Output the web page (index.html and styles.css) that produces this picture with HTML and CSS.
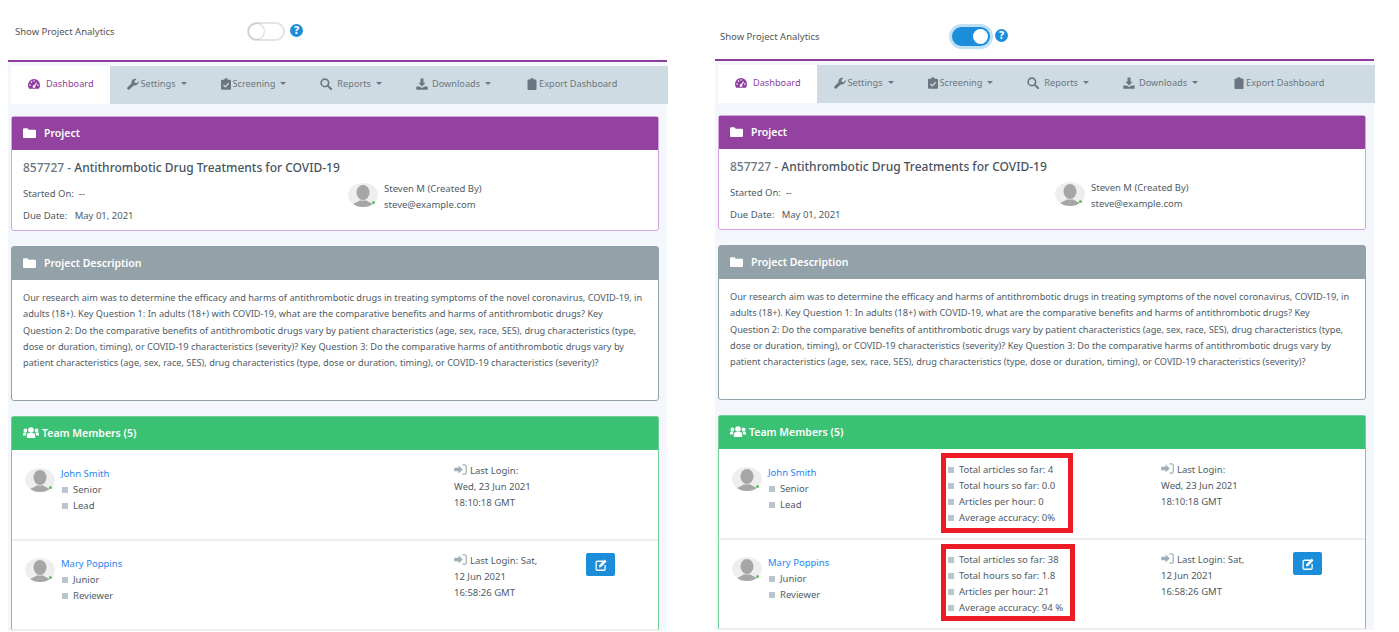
FILE: index.html
```html
<!DOCTYPE html>
<html lang="en">
<head>
    <meta charset="UTF-8">
    <title>Project Dashboard</title>
    <link rel="stylesheet" href="styles.css">
</head>
<body>
    <!-- icon set -->
    <svg class="icon-defs" xmlns="http://www.w3.org/2000/svg">
        <symbol id="i-gauge" viewBox="0 0 16 14"><path d="M8 .4A8 8 0 0 0 0 8.400c0 1.900.5 3.500 1.500 5h13c1-1.500 1.500-3.100 1.500-5A8 8 0 0 0 8 .4z"/><g fill="#fff"><circle cx="2.800" cy="8.400" r="1.100"/><circle cx="4.600" cy="4.400" r="1.100"/><circle cx="8" cy="3" r="1.100"/><circle cx="13.200" cy="8.400" r="1.100"/><circle cx="8" cy="10.400" r="1.800"/><path d="M7.200 10l3.800-5.400 1.100.7-3.400 5.600z"/></g></symbol>
        <symbol id="i-wrench" viewBox="0 0 16 16"><path d="M15.700 4.100l-2.800 2.800-2.400-.5-.5-2.400L12.800 1.200C10.900.5 8.700 1 7.300 2.400 6 3.700 5.600 5.500 6.100 7L.8 12.300c-.8.8-.8 2 0 2.800s2 .8 2.800 0L8.900 9.900c1.500.5 3.300.1 4.600-1.200 1.400-1.400 2.800-3 2.200-4.600z"/></symbol>
        <symbol id="i-check-clip" viewBox="0 0 14 16"><path d="M1.500 2H4.500a2.500 2 0 0 1 5 0h3A1.500 1.500 0 0 1 14 3.500v11a1.500 1.500 0 0 1-1.500 1.500h-11A1.500 1.500 0 0 1 0 14.500v-11A1.500 1.500 0 0 1 1.500 2z"/><path d="M3.500 9.500l2.500 2.500 4.800-5" fill="none" stroke="#cfdbe2" stroke-width="1.800"/></symbol>
        <symbol id="i-search" viewBox="0 0 16 16"><circle cx="6.500" cy="6.500" r="5" fill="none" stroke="currentColor" stroke-width="2.200"/><path d="M10.200 10.200l5 5" stroke="currentColor" stroke-width="2.600" stroke-linecap="round"/></symbol>
        <symbol id="i-download" viewBox="0 0 16 16"><path d="M6 .8h4v5.600h2.800L8 11.200 3.200 6.400H6z"/><path d="M.4 11.400h4.400L8 13.400l3.200-2h4.400V15.600H.4z"/></symbol>
        <symbol id="i-clip" viewBox="0 0 12 16"><path d="M1.200 2H3.600a2.400 2 0 0 1 4.800 0h2.400A1.200 1.200 0 0 1 12 3.200v11.600a1.200 1.200 0 0 1-1.200 1.200H1.200A1.200 1.200 0 0 1 0 14.800V3.200A1.200 1.200 0 0 1 1.200 2z"/></symbol>
        <symbol id="i-folder" viewBox="0 0 16 12"><path d="M1.500 0h4L7 2h7.500A1.500 1.500 0 0 1 16 3.500v7a1.500 1.500 0 0 1-1.500 1.500h-13A1.500 1.500 0 0 1 0 10.500v-9A1.500 1.500 0 0 1 1.500 0z"/></symbol>
        <symbol id="i-users" viewBox="0 0 16 11"><circle cx="8" cy="3" r="2.800"/><path d="M3.800 11V8.200C3.800 6.800 5 6 6 6h4c1 0 2.200.8 2.200 2.200V11z"/><circle cx="2.400" cy="3.400" r="1.900"/><circle cx="13.600" cy="3.400" r="1.900"/><path d="M0 8.500V7C0 6 .8 5.600 1.500 5.600h2C3 6.500 2.900 7.500 2.900 8.500zM16 8.500V7C16 6 15.200 5.600 14.500 5.600h-2c.5.900.6 1.900.6 2.900z"/></symbol>
        <symbol id="i-signin" viewBox="0 0 16 14"><path d="M0 4.800h5.500V1.800L11 7l-5.500 5.200V9.200H0z"/><path d="M10.500 1h3A2 2 0 0 1 15.300 3v8a2 2 0 0 1-1.800 2h-3" fill="none" stroke="currentColor" stroke-width="1.600"/></symbol>
        <symbol id="i-edit" viewBox="0 0 16 16"><path d="M11 3H3a1.500 1.500 0 0 0-1.500 1.500v9A1.500 1.500 0 0 0 3 15h9a1.500 1.500 0 0 0 1.500-1.500V8" fill="none" stroke="currentColor" stroke-width="1.700"/><path d="M13 .8l2.400 2.400-7.200 7.400-3 .6.600-3z"/></symbol>
        <symbol id="i-avatar" viewBox="0 0 30 24"><ellipse cx="15" cy="9.500" rx="6.500" ry="7.500"/><path d="M3 24c1.500-4 6-4 8.500-6.500h7c2.500 2.500 7 2.500 8.500 6.500z"/></symbol>
    </svg>

    <div class="page">
        <!-- Levi posnetek: analitika izklopljena -->
        <section class="panel">
            <div class="topbar topbar-off">
                <span class="topbar-label">Show Project Analytics</span>
                <span class="toggle"><span class="toggle-knob"></span></span>
                <span class="help">?</span>
            </div>
            <div class="content">
                <nav class="tabs">
                    <a class="tab tab-active"><svg class="tab-icon tab-icon-wide"><use href="#i-gauge"/></svg>Dashboard</a>
                    <a class="tab caret"><svg class="tab-icon tab-icon-tight"><use href="#i-wrench"/></svg>Settings</a>
                    <a class="tab caret"><svg class="tab-icon tab-icon-narrow"><use href="#i-check-clip"/></svg>Screening</a>
                    <a class="tab caret"><svg class="tab-icon"><use href="#i-search"/></svg>Reports</a>
                    <a class="tab caret"><svg class="tab-icon tab-icon-mid"><use href="#i-download"/></svg>Downloads</a>
                    <a class="tab tab-export"><svg class="tab-icon tab-icon-narrow"><use href="#i-clip"/></svg>Export Dashboard</a>
                </nav>

                <div class="card card-purple">
                    <div class="card-head"><svg class="head-icon"><use href="#i-folder"/></svg>Project</div>
                    <div class="project-body">
                        <h2 class="project-title"><span class="project-id">857727 -</span> Antithrombotic Drug Treatments for COVID-19</h2>
                        <div class="project-meta">
                            <div class="dates">
                                <p class="date-line">Started On:&nbsp; --</p>
                                <p class="date-line">Due Date: &nbsp; May 01, 2021</p>
                            </div>
                            <div class="creator">
                                <span class="avatar"><svg><use href="#i-avatar"/></svg></span>
                                <div class="creator-text">Steven M (Created By)<br>steve@example.com</div>
                            </div>
                        </div>
                    </div>
                </div>

                <div class="card card-gray">
                    <div class="card-head"><svg class="head-icon"><use href="#i-folder"/></svg>Project Description</div>
                    <p class="description">Our research aim was to determine the efficacy and harms of antithrombotic drugs in treating symptoms of the novel coronavirus, COVID-19, in<br>adults (18+). Key Question 1: In adults (18+) with COVID-19, what are the comparative benefits and harms of antithrombotic drugs? Key<br>Question 2: Do the comparative benefits of antithrombotic drugs vary by patient characteristics (age, sex, race, SES), drug characteristics (type,<br>dose or duration, timing), or COVID-19 characteristics (severity)? Key Question 3: Do the comparative harms of antithrombotic drugs vary by<br>patient characteristics (age, sex, race, SES), drug characteristics (type, dose or duration, timing), or COVID-19 characteristics (severity)?</p>
                </div>

                <div class="card card-green">
                    <div class="card-head"><svg class="head-icon head-icon-users"><use href="#i-users"/></svg>Team Members (5)</div>
                    <div class="member">
                        <div class="who">
                            <span class="avatar"><svg><use href="#i-avatar"/></svg></span>
                            <div>
                                <a class="name">John Smith</a>
                                <ul class="squares"><li>Senior</li><li>Lead</li></ul>
                            </div>
                        </div>
                        <div></div>
                        <div class="login"><svg class="login-icon"><use href="#i-signin"/></svg>Last Login:<br>Wed, 23 Jun 2021<br>18:10:18 GMT</div>
                        <div></div>
                    </div>
                    <div class="member">
                        <div class="who">
                            <span class="avatar"><svg><use href="#i-avatar"/></svg></span>
                            <div>
                                <a class="name">Mary Poppins</a>
                                <ul class="squares"><li>Junior</li><li>Reviewer</li></ul>
                            </div>
                        </div>
                        <div></div>
                        <div class="login"><svg class="login-icon"><use href="#i-signin"/></svg>Last Login: Sat,<br>12 Jun 2021<br>16:58:26 GMT</div>
                        <div><button class="edit-btn"><svg><use href="#i-edit"/></svg></button></div>
                    </div>
                </div>
            </div>
        </section>

        <!-- Desni posnetek: analitika vklopljena -->
        <section class="panel">
            <div class="topbar topbar-on">
                <span class="topbar-label">Show Project Analytics</span>
                <span class="toggle toggle-on"><span class="toggle-knob"></span></span>
                <span class="help">?</span>
            </div>
            <div class="content">
                <nav class="tabs">
                    <a class="tab tab-active"><svg class="tab-icon tab-icon-wide"><use href="#i-gauge"/></svg>Dashboard</a>
                    <a class="tab caret"><svg class="tab-icon tab-icon-tight"><use href="#i-wrench"/></svg>Settings</a>
                    <a class="tab caret"><svg class="tab-icon tab-icon-narrow"><use href="#i-check-clip"/></svg>Screening</a>
                    <a class="tab caret"><svg class="tab-icon"><use href="#i-search"/></svg>Reports</a>
                    <a class="tab caret"><svg class="tab-icon tab-icon-mid"><use href="#i-download"/></svg>Downloads</a>
                    <a class="tab tab-export"><svg class="tab-icon tab-icon-narrow"><use href="#i-clip"/></svg>Export Dashboard</a>
                </nav>

                <div class="card card-purple">
                    <div class="card-head"><svg class="head-icon"><use href="#i-folder"/></svg>Project</div>
                    <div class="project-body">
                        <h2 class="project-title"><span class="project-id">857727 -</span> Antithrombotic Drug Treatments for COVID-19</h2>
                        <div class="project-meta">
                            <div class="dates">
                                <p class="date-line">Started On:&nbsp; --</p>
                                <p class="date-line">Due Date: &nbsp; May 01, 2021</p>
                            </div>
                            <div class="creator">
                                <span class="avatar"><svg><use href="#i-avatar"/></svg></span>
                                <div class="creator-text">Steven M (Created By)<br>steve@example.com</div>
                            </div>
                        </div>
                    </div>
                </div>

                <div class="card card-gray">
                    <div class="card-head"><svg class="head-icon"><use href="#i-folder"/></svg>Project Description</div>
                    <p class="description">Our research aim was to determine the efficacy and harms of antithrombotic drugs in treating symptoms of the novel coronavirus, COVID-19, in<br>adults (18+). Key Question 1: In adults (18+) with COVID-19, what are the comparative benefits and harms of antithrombotic drugs? Key<br>Question 2: Do the comparative benefits of antithrombotic drugs vary by patient characteristics (age, sex, race, SES), drug characteristics (type,<br>dose or duration, timing), or COVID-19 characteristics (severity)? Key Question 3: Do the comparative harms of antithrombotic drugs vary by<br>patient characteristics (age, sex, race, SES), drug characteristics (type, dose or duration, timing), or COVID-19 characteristics (severity)?</p>
                </div>

                <div class="card card-green">
                    <div class="card-head"><svg class="head-icon head-icon-users"><use href="#i-users"/></svg>Team Members (5)</div>
                    <div class="member">
                        <div class="who">
                            <span class="avatar"><svg><use href="#i-avatar"/></svg></span>
                            <div>
                                <a class="name">John Smith</a>
                                <ul class="squares"><li>Senior</li><li>Lead</li></ul>
                            </div>
                        </div>
                        <div class="stats stats-first">
                            <ul class="squares"><li>Total articles so far: 4</li><li>Total hours so far: 0.0</li><li>Articles per hour: 0</li><li>Average accuracy: 0%</li></ul>
                        </div>
                        <div class="login"><svg class="login-icon"><use href="#i-signin"/></svg>Last Login:<br>Wed, 23 Jun 2021<br>18:10:18 GMT</div>
                        <div></div>
                    </div>
                    <div class="member">
                        <div class="who">
                            <span class="avatar"><svg><use href="#i-avatar"/></svg></span>
                            <div>
                                <a class="name">Mary Poppins</a>
                                <ul class="squares"><li>Junior</li><li>Reviewer</li></ul>
                            </div>
                        </div>
                        <div class="stats stats-second">
                            <ul class="squares"><li>Total articles so far: 38</li><li>Total hours so far: 1.8</li><li>Articles per hour: 21</li><li>Average accuracy: 94 %</li></ul>
                        </div>
                        <div class="login"><svg class="login-icon"><use href="#i-signin"/></svg>Last Login: Sat,<br>12 Jun 2021<br>16:58:26 GMT</div>
                        <div><button class="edit-btn"><svg><use href="#i-edit"/></svg></button></div>
                    </div>
                </div>
            </div>
        </section>
    </div>
</body>
</html>
```

FILE: styles.css
```css
html,
body {
    height: 632px;
    overflow: hidden;
}

body {
    margin: 0;
    background-color: #fff;
    color: #4f5b66;
    font-family: 'Noto Sans', sans-serif;
    font-size: 9.5px;
    line-height: 16px;
}

.icon-defs {
    display: none;
}

.page {
    display: flex;
    gap: 48px;
    height: 632px;
    padding-left: 8px;
}

.panel {
    width: 659px;
}

/* Vrstica s stikalom */
.topbar {
    display: flex;
    align-items: flex-start;
    box-sizing: border-box;
}

.topbar-off {
    height: 60px;
    padding: 22px 0 0 7px;
}

.topbar-on {
    height: 59px;
    padding: 27px 0 0 5px;
}

.topbar-label {
    width: 232px;
    line-height: 19px;
    color: #555;
}

.toggle {
    box-sizing: border-box;
    display: flex;
    align-items: center;
    width: 38px;
    height: 19px;
    border: 2px solid #e3e3e3;
    border-radius: 10px;
    background-color: #fff;
}

.toggle-knob {
    width: 15px;
    height: 15px;
    border-radius: 50%;
    background-color: #fff;
    box-shadow: 0 0 2px rgba(0, 0, 0, 0.45);
}

.toggle-on {
    justify-content: flex-end;
    border-color: #1c8dd9;
    background-color: #1c8dd9;
    box-shadow: 0 0 0 3px #bfe0f5;
}

.toggle-on .toggle-knob {
    box-shadow: none;
}

.help {
    width: 13px;
    height: 13px;
    margin: 2px 0 0 5px;
    border-radius: 50%;
    background-color: #1c8dd9;
    color: #fff;
    font-size: 10.5px;
    font-weight: 800;
    line-height: 13px;
    text-align: center;
}

/* Glavni del */
.content {
    border-top: 2px solid #8e3c9f;
    background-color: #f3f6fb;
    padding: 4px 0 0 3px;
}

.tabs {
    display: flex;
    width: 657px;
    height: 38px;
    margin-bottom: 12px;
    background-color: #cfdbe2;
    font-size: 9.2px;
}

.tab {
    display: flex;
    align-items: center;
    padding: 0 17px 3px;
    color: #6b7780;
}

.tab-active {
    padding-right: 16px;
    background-color: #fff;
    color: #8e3c9f;
}

.tab-export {
    margin-left: 2px;
}

.tab-icon {
    width: 12px;
    height: 12px;
    margin-right: 5px;
    fill: currentColor;
}

.tab-icon-wide {
    margin-right: 6px;
}

.tab-icon-mid {
    margin-right: 4px;
}

.tab-icon-tight {
    margin-right: 2px;
}

.tab-icon-narrow {
    width: 10px;
    margin-right: 2px;
}

.caret::after {
    content: "";
    margin-left: 5px;
    border-top: 3px solid #6b7780;
    border-left: 3px solid transparent;
    border-right: 3px solid transparent;
}

.card {
    width: 648px;
    box-sizing: border-box;
    margin-bottom: 15px;
    border: 1px solid;
    border-radius: 3px;
    background-color: #fff;
}

.card-purple { border-color: #d3a5de; }
.card-gray { border-color: #93a1a8; }
.card-green { border-color: #6fcf97; border-width: 1px 1px 0 1px; margin-bottom: 0; }

.card-head {
    display: flex;
    align-items: center;
    box-sizing: border-box;
    height: 33px;
    padding: 0 0 2px 11px;
    color: #fff;
    font-size: 10.5px;
    font-weight: 600;
}

.card-purple .card-head { background-color: #93439f; }
.card-gray .card-head { background-color: #93a1a8; }
.card-green .card-head { background-color: #3bc174; }

.head-icon {
    width: 13px;
    height: 10px;
    margin-right: 8px;
    fill: #fff;
}

.head-icon-users {
    width: 16px;
    height: 11px;
    margin-right: 3px;
}

.project-body {
    box-sizing: border-box;
    height: 80px;
    padding: 10px 11px 0;
}

.project-title {
    margin: 0;
    font-size: 12px;
    font-weight: 500;
    line-height: 16px;
    color: #47535e;
}

.project-id {
    color: #6b7780;
}

.project-meta {
    display: flex;
    margin-top: 5px;
}

.dates {
    width: 325px;
    padding-top: 5px;
}

.date-line {
    margin: 0 0 6px;
}

.creator {
    display: flex;
    gap: 6px;
}

.avatar {
    position: relative;
    flex: none;
    display: block;
    width: 30px;
    height: 24px;
    margin-top: 2px;
    border-radius: 50%;
    background-color: #eee;
}

.avatar svg {
    display: block;
    width: 30px;
    height: 24px;
    border-radius: 50%;
    fill: #a6a6a6;
}

/* pika za prisotnost */
.avatar::after {
    content: "";
    position: absolute;
    right: 3px;
    bottom: 3px;
    width: 3px;
    height: 3px;
    border-radius: 50%;
    background-color: #5cc15c;
}

.description {
    box-sizing: border-box;
    height: 120px;
    margin: 0;
    padding: 10px 11px 5px;
    font-size: 9.2px;
    line-height: 16.25px;
    white-space: nowrap;
}

.member {
    display: grid;
    grid-template-columns: 222px 220px 132px 1fr;
    box-sizing: border-box;
    height: 90px;
    border-bottom: 2px solid #eee;
}

.card-head + .member {
    height: 91px;
    padding-top: 1px;
}

.who {
    display: flex;
    gap: 6px;
    padding: 15px 0 0 13px;
}

.name {
    color: #2684f5;
}

.squares {
    margin: 0;
    padding: 0;
    list-style: none;
}

.squares li {
    display: flex;
    align-items: center;
}

.squares li::before {
    content: "";
    width: 6px;
    height: 6px;
    margin: 0 5px 0 1px;
    background-color: #b9c5cc;
}

/* Rdeče označeno */
.stats {
    box-sizing: border-box;
    border: 5px solid #ed1c24;
    padding-left: 1px;
}

.stats-first {
    width: 132px;
    height: 80px;
    margin-top: 3px;
    padding-top: 4px;
}

.stats-second {
    width: 134px;
    height: 77px;
    margin-top: 4px;
    padding-top: 3px;
}

.login {
    padding-top: 12px;
}

.login-icon {
    width: 13px;
    height: 11px;
    margin-right: 3px;
    vertical-align: -1px;
    fill: #9fb0b8;
    color: #9fb0b8;
}

.edit-btn {
    display: flex;
    align-items: center;
    justify-content: center;
    width: 29px;
    height: 23px;
    margin-top: 12px;
    padding: 0;
    border: 0;
    border-radius: 2px;
    background-color: #1c8dd9;
}

.edit-btn svg {
    width: 12px;
    height: 12px;
    fill: #fff;
    color: #fff;
}
```
